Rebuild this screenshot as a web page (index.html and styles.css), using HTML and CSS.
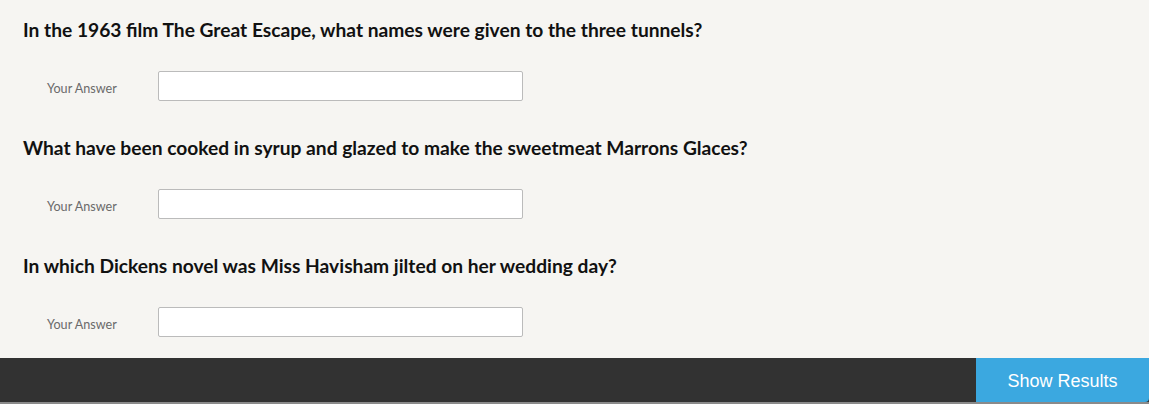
FILE: index.html
```html
<!DOCTYPE html>
<html>
<head>
<meta charset="utf-8">
<link rel="stylesheet" href="styles.css">
</head>
<body>
<div class="quiz">
  <div class="question">
    <h2 class="question-title">In the 1963 film The Great Escape, what names were given to the three tunnels?</h2>
    <div class="answer-row">
      <label class="answer-label">Your Answer</label>
      <input class="answer-input" type="text">
    </div>
  </div>
  <div class="question">
    <h2 class="question-title">What have been cooked in syrup and glazed to make the sweetmeat Marrons Glaces?</h2>
    <div class="answer-row">
      <label class="answer-label">Your Answer</label>
      <input class="answer-input" type="text">
    </div>
  </div>
  <div class="question">
    <h2 class="question-title">In which Dickens novel was Miss Havisham jilted on her wedding day?</h2>
    <div class="answer-row">
      <label class="answer-label">Your Answer</label>
      <input class="answer-input" type="text">
    </div>
  </div>
</div>
<div class="footer-bar">
  <button class="show-results">Show Results</button>
</div>
</body>
</html>
```
FILE: styles.css
```css
html, body {
  margin: 0;
  padding: 0;
  background: #f6f5f2;
  height: 100%;
}
body {
  font-family: Lato, "Open Sans", sans-serif;
  display: flex;
  flex-direction: column;
}
.quiz {
  padding: 18px 0 21px 23px;
  display: flex;
  flex-direction: column;
  gap: 35px;
}
.question-title {
  margin: 0;
  font-size: 19.2px;
  line-height: 24px;
  font-weight: 700;
  color: #111;
}
.answer-row {
  margin-top: 29px;
  display: flex;
  align-items: center;
  padding-left: 24px;
}
.answer-label {
  width: 111px;
  padding-top: 4px;
  font-size: 12.6px;
  color: #6a6a6a;
}
.answer-input {
  box-sizing: border-box;
  width: 365px;
  height: 30px;
  margin: 0;
  border: 1px solid #bbb;
  border-radius: 2px;
  background: #fff;
}
.footer-bar {
  height: 44px;
  background: #323232;
  border-bottom: 2px solid #8a8a8a;
  display: flex;
  justify-content: flex-end;
}
.show-results {
  width: 173px;
  height: 44px;
  border: 0;
  margin: 0;
  background: #3ba8e0;
  color: #fff;
  font-family: "Liberation Sans", Arial, sans-serif;
  font-size: 18px;
  border-bottom-right-radius: 4px;
  padding: 2px 0 0 0;
}
```
